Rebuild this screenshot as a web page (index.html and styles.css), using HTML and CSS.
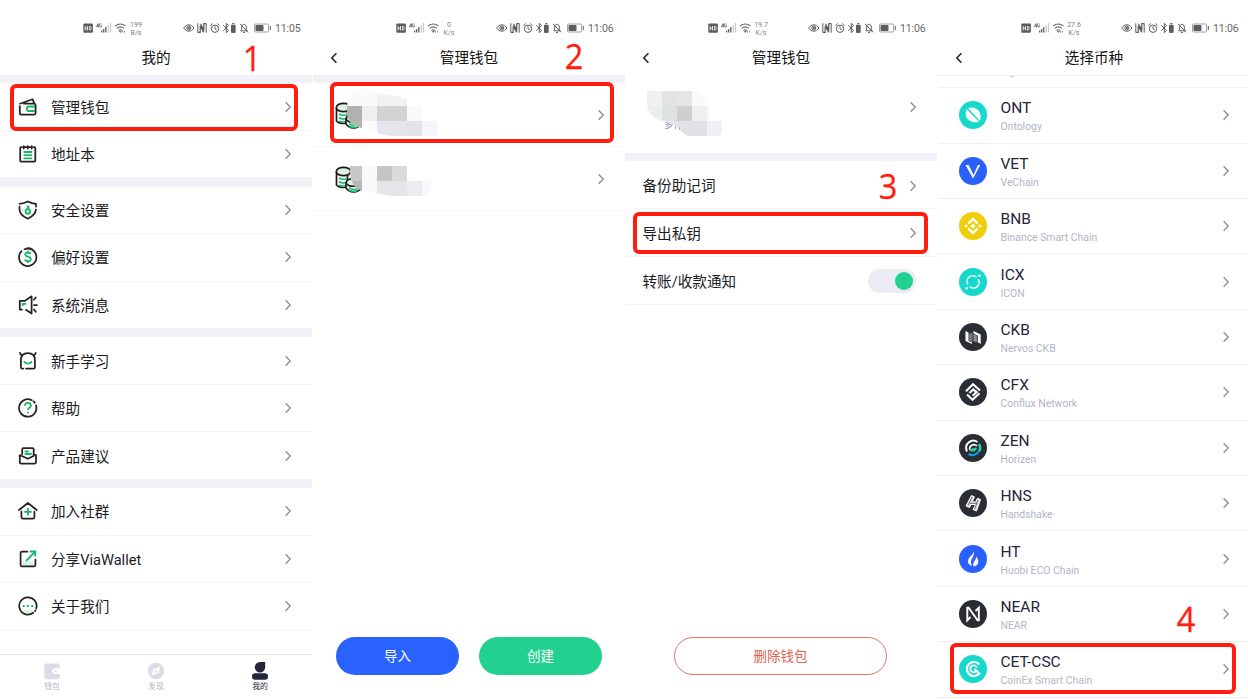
FILE: index.html
```html
<!DOCTYPE html>
<html lang="zh-CN">
<head>
<meta charset="utf-8">
<title>ViaWallet</title>
<link rel="stylesheet" href="styles.css">
</head>
<body>
<svg class="defs" width="0" height="0" aria-hidden="true">
  <symbol id="next" viewBox="0 0 8 12"><path d="M1.600 1.200 6.200 6 1.600 10.800" fill="none" stroke="#8d8da8" stroke-width="1.400"/></symbol>
  <symbol id="back" viewBox="0 0 8 12"><path d="M6.400 1.300 1.800 6 6.400 10.700" fill="none" stroke="#25253c" stroke-width="1.600"/></symbol>
  <symbol id="signals" viewBox="83 21 44 14">
    <rect x="83.300" y="23.500" width="9.600" height="9.300" rx="1" fill="#5c5c5c"/>
    <path d="M85.200 26v4.500M87.500 26v4.500M85.200 28.300h2.300M89.400 26.400v3.700h.6c1.700 0 1.700-3.700 0-3.700z" fill="none" stroke="#fff" stroke-width=".8"/>
    <path d="M98.300 27.500v-4l-2 2.800h2.600M101.500 24.200c-1.600-1-2.200 0-2.200 1.300s1.200 2.200 2.200 1.200v-1h-.9" fill="none" stroke="#555" stroke-width=".8"/>
    <path d="M101.700 32.500v-2M103.700 32.500v-3.500M105.800 32.500v-5.500" stroke="#555" stroke-width="1.200"/>
    <path d="M108.200 32.500v-7.500M110.500 32.500v-9.500" stroke="#c8c8c8" stroke-width="1.200"/>
    <path d="M115 26.200c3.400-2.800 7.300-2.800 10.600 0M116.700 28.400c2.300-1.900 5-1.900 7.200 0M118.500 30.400c1.300-1 2.300-1 3.500 0" fill="none" stroke="#666" stroke-width="1.100"/>
    <path d="M119.300 31.200h2l-1 1.300zM122.600 30.600v2M124.400 30.600v2" fill="#666" stroke="#666" stroke-width=".7"/>
  </symbol>
  <symbol id="indicators" viewBox="183 21 90 14">
    <g fill="none" stroke="#5d5d5d" stroke-width="1">
      <path d="M183.700 28c2.800-4.300 7.400-4.300 10.200 0-2.800 4.300-7.400 4.300-10.200 0z"/>
      <circle cx="188.800" cy="28" r="2"/><circle cx="188.800" cy="28" r=".8" fill="#5d5d5d"/>
      <path d="M197.800 23.300v9.400M206.200 23.300v9.400" stroke-width="1"/>
      <path d="M198 32.400h2.200v-6.500l3.400 6.300v-6.500M206 23.600h-2.200v6.500l-3.400-6.300" stroke-width="1.200"/>
      <circle cx="215" cy="28.700" r="3.700"/><path d="M215 26.300v2.600l1.700 1M210.500 25.500l2.200-2M219.500 25.500l-2.200-2"/>
      <path d="M223.300 25.300l5.300 5.200-2.300 2.200v-9.400l2.300 2.200-5.300 5.200" stroke-width="1"/>
      <path d="M231.500 25.200h3.600v7.200h-3.600z" fill="#5d5d5d"/><path d="M232.200 23.600h2.300"/>
      <path d="M240.800 30.800h6.500l-1-1.500v-2.300c0-3.200-4.200-3.800-4.700-.3v2.600zM243 32.400h2M240 23.800l8 8.500"/>
      <rect x="254.500" y="24" width="14" height="8" rx="1" stroke="#a0a0a0"/>
      <path d="M256 25.500h7v5h-7z" fill="#5d5d5d"/><path d="M270.300 26v4"/>
    </g>
  </symbol>
  <symbol id="coins" viewBox="0 0 28 28">
    <path d="M1.500 5.500v13.500c2.500 3 8 3 11 1.500V5.500" fill="#fff" stroke="#231815" stroke-width="1.700"/>
    <path d="M4 12c2 1.500 5 1.500 8 .7M4 15.500c2 1.500 5 1.500 7 .7M4 19c2 1.200 4 1.200 6 .7" fill="none" stroke="#18ba6e" stroke-width="1.700"/>
    <ellipse cx="8.500" cy="5.500" rx="7.200" ry="4.200" fill="#d9f4e6" stroke="#231815" stroke-width="1.700"/>
    <path d="M11 17v5c3.500 5 11 5 15 1V17z" fill="#fff" stroke="#231815" stroke-width="1.700"/>
    <path d="M14 21.800c3 1.800 7 1.800 9 .8M14 24.300c3 1.300 6 1.300 8 .8" fill="none" stroke="#18ba6e" stroke-width="1.600"/>
    <ellipse cx="18" cy="16.500" rx="6.800" ry="3.800" fill="#d9f4e6" stroke="#231815" stroke-width="1.600"/>
  </symbol>
</svg>

<main class="stage">
  <section class="phone">
    <header class="top">
      <div class="status"><svg class="sig"><use href="#signals"/></svg><span class="speed">199<br>B/s</span><svg class="ind"><use href="#indicators"/></svg><time>11:05</time></div>
      <div class="title">我的</div>
    </header>
    <div class="band"></div>
    <a class="item"><svg class="ico" viewBox="0 0 20 20"><path d="M1.800 9v7.200q0 1.300 1.300 1.300h13q1.500 0 1.500-1.500V8.200q0-1.500-1.500-1.500H6M2 6.700 14.500 2.200l1.800 4.300" class="ink"/><path d="M17 9.500h-6q-2.200 0-2.200 2.300T11 14h6" class="mint heavy"/></svg><span>管理钱包</span><svg class="next"><use href="#next"/></svg></a>
    <a class="item"><svg class="ico" viewBox="0 0 20 20"><path d="M4 3.200H3Q2.200 3.200 2.200 4v12.700q0 .8.800.8h13.500q.8 0 .8-.8V4q0-.8-.8-.8h-1M7.300 3.200h1.500M11 3.200h1.500M5.800 2v2.500M13.700 2v2.500M9.800 2v2.500" class="ink"/><path d="M5.500 8h8.700M5.500 11.200h8.700M5.500 14.400h8.700" class="mint heavy"/></svg><span>地址本</span><svg class="next"><use href="#next"/></svg></a>
    <div class="band"></div>
    <a class="item"><svg class="ico" viewBox="0 0 20 20"><path d="M1.500 6.500v3c0 4.300 4 7.300 8.300 9.200 4.200-1.900 7.700-4.700 8.100-9M18 6.500V3.800c-3.200-.2-5.500-1-8.200-2.300C7.500 2.700 5 3.500 1.600 3.800" class="ink"/><circle cx="9.800" cy="11.500" r="2.300" class="mint heavy wash"/><path d="M9.800 5.500v4M9.800 7.200h1.500" class="mint heavy"/></svg><span>安全设置</span><svg class="next"><use href="#next"/></svg></a>
    <a class="item"><svg class="ico" viewBox="0 0 20 20"><path d="M3.500 4.200a8.700 8.700 0 1 0 3-2M8.800 1.300a8.700 8.700 0 0 1 5.500 1.100" class="ink"/><path d="M12.500 7.200c-.4-2.300-5.300-2.300-5.300 0 0 3.300 5.600 1.600 5.600 5 0 2.800-5.600 2.600-5.700 0M9.900 3.800v2M9.900 13.800v2.300" class="mint heavy"/></svg><span>偏好设置</span><svg class="next"><use href="#next"/></svg></a>
    <a class="item"><svg class="ico" viewBox="0 0 20 20"><path d="M4 14.500H1.800V5.800H7L13.600 1.300v17.200L8 14.800M16 4.800l1.800-2.300M16 10h2.800M16 14.500l1.800 2.300" class="ink"/><path d="M4.700 11V8.800h3.500" class="mint heavy"/></svg><span>系统消息</span><svg class="next"><use href="#next"/></svg></a>
    <div class="band"></div>
    <a class="item"><svg class="ico" viewBox="0 0 20 20"><path d="M2 1.800q.3 1.500 1.700 2.500M17.700 1.800q-.3 1.500-1.700 2.500M8 17.600h7.500q1.400 0 1.400-1.400V9q0-7-7-7Q2.900 2 2.900 9v7.200q0 1.400 1.400 1.400h1" class="ink"/><path d="M5.800 10.300q4.100 4.500 8.200 0" class="mint heavy"/></svg><span>新手学习</span><svg class="next"><use href="#next"/></svg></a>
    <a class="item"><svg class="ico" viewBox="0 0 20 20"><path d="M18 7.300a8.700 8.700 0 1 1-4.200-5M15.700 3.500a9 9 0 0 1 1 1.100" class="ink"/><path d="M6.900 7.800C7 4 12.900 4 12.900 7.500c0 2.200-3 2.200-3 4.500M9.900 13.800v1.700" class="mint heavy"/></svg><span>帮助</span><svg class="next"><use href="#next"/></svg></a>
    <a class="item"><svg class="ico" viewBox="0 0 20 20"><path d="M4.200 8V3.300Q4.200 2 5.500 2h9q1.200 0 1.200 1.300V7.500M15.500 8.500l2.500.7v7q0 1.500-1.500 1.500H3.300q-1.500 0-1.500-1.500V9l8 3.800 5.700-2.800" class="ink"/><path d="M6.700 5.500h4M6.700 8h7" class="mint heavy"/></svg><span>产品建议</span><svg class="next"><use href="#next"/></svg></a>
    <div class="band"></div>
    <a class="item"><svg class="ico" viewBox="0 0 20 20"><path d="M1 9 9.900 2l8.800 7M3.400 10.500v5.700q0 1.500 1.500 1.500h10q1.500 0 1.500-1.500v-5.700" class="ink"/><path d="M9.900 7v7.500M6.200 10.800h7.500" class="mint heavy"/></svg><span>加入社群</span><svg class="next"><use href="#next"/></svg></a>
    <a class="item"><svg class="ico" viewBox="0 0 20 20"><path d="M5 12.500h10V17H5z" fill="#d5f3e4"/><path d="M9.500 2.600H4Q2.600 2.600 2.600 4v12q0 1.400 1.400 1.400h12q1.400 0 1.400-1.400v-5.500" class="ink"/><path d="M8 12 17 2.800M11.800 2.500h5.500v5" class="mint heavy"/></svg><span>分享ViaWallet</span><svg class="next"><use href="#next"/></svg></a>
    <a class="item"><svg class="ico" viewBox="0 0 20 20"><path d="M4 14h12l-3.500 3.500h-5z" fill="#d5f3e4"/><path d="M15.300 16.800a8.700 8.700 0 1 1 3-4.500M17.500 14.300l-.5.800" class="ink"/><path d="M4.600 10h2M8.900 10h2M13.200 10h2" class="mint heavy"/></svg><span>关于我们</span><svg class="next"><use href="#next"/></svg></a>
    <nav class="tabs">
      <div class="tab"><svg viewBox="0 0 18 18"><path d="M3.500 1.500h11q2.200 0 2.200 2V6.300h-4a3.200 3.200 0 0 0 0 5.600h4V15q0 2.200-2.200 2.200h-11q-2.200 0-2.200-2.200V3.700q0-2.200 2.200-2.200z" fill="#dcdce6"/><path d="M12 6.300h5v5.600h-5a2.800 2.800 0 0 1 0-5.600z" fill="#fff"/><circle cx="12.700" cy="9.100" r="1.200" fill="#dcdce6"/></svg><span>钱包</span></div>
      <div class="tab"><svg viewBox="0 0 18 18"><circle cx="9" cy="9" r="8.200" fill="#dcdce6"/><path d="M13.500 4.500 11.500 11l-7 2.500L6.500 7z" fill="#fff"/><path d="M7.500 10.500 10 8" stroke="#dcdce6" stroke-width="1.600"/></svg><span>发现</span></div>
      <div class="tab on"><svg viewBox="0 0 18 18"><path d="M9 0h5.200V5.200A5.200 5.200 0 1 1 9 0z" fill="#25253c"/><rect x="1" y="11.300" width="16" height="6.500" rx="3" fill="#25253c"/></svg><span>我的</span></div>
    </nav>
    <b class="frame f1"></b><b class="num n1">1</b>
  </section>

  <section class="phone second">
    <header class="top">
      <div class="status"><svg class="sig"><use href="#signals"/></svg><span class="speed">0<br>K/s</span><svg class="ind"><use href="#indicators"/></svg><time>11:06</time></div>
      <svg class="back"><use href="#back"/></svg><div class="title">管理钱包</div>
    </header>
    <div class="band"></div>
    <a class="wallet">
      <svg class="blur" viewBox="0 3 104 50">
        <use href="#coins" x="0" y="15" width="28" height="28"/>
        <clipPath id="c1"><path d="M12 20Q13 2 29 2q10 0 15 5 12 0 28 5v7h16v14h14v16H59q-15-1-17-4l-19-5q-12-3-11-20z"/></clipPath>
        <g clip-path="url(#c1)"><path fill="#fafafa" d="M12 0h45v50H12z"/><path fill="#f2f2f2" d="M42 4h30v15H42z"/><path fill="#b3b0b0" d="M12 19h15v15H12z"/><path fill="#a9b8b0" d="M12 34h15v15H12z"/><path fill="#efefef" d="M27 19h15v15H27z"/><path fill="#d3d3d3" d="M42 19h30v15H42z"/><path fill="#fafafa" d="M72 19h15v15H72z"/><path fill="#e5e6eb" d="M42 34h15v15H42z"/><path fill="#e7e7e9" d="M57 34h15v15H57z"/><path fill="#e4e4e7" d="M72 34h15v15H72z"/><path fill="#f5f6fb" d="M87 34h15v15H87z"/></g>
      </svg>
      <svg class="next"><use href="#next"/></svg>
    </a>
    <a class="wallet">
      <svg class="blur" viewBox="0 3 104 50">
        <use href="#coins" x="0" y="15" width="28" height="28"/>
        <clipPath id="c2"><path d="M15 15h57v15h24q1 10-6 15H57L27 40Q16 36 15 23z"/></clipPath>
        <g clip-path="url(#c2)"><path fill="#c9c8c8" d="M12 15h15v15H12z"/><path fill="#b1bbb5" d="M12 30h15v15H12z"/><path fill="#f8f8fa" d="M27 15h15v30H27z"/><path fill="#c5c5c5" d="M42 15h15v15H42z"/><path fill="#dadada" d="M57 15h15v15H57z"/><path fill="#e5e5e9" d="M42 30h30v15H42z"/><path fill="#ececef" d="M72 30h15v15H72z"/><path fill="#f7f8fc" d="M87 30h15v15H87z"/></g>
      </svg>
      <svg class="next"><use href="#next"/></svg>
    </a>
    <div class="actions"><button class="btn blue">导入</button><button class="btn green">创建</button></div>
    <b class="frame f2"></b><b class="num n2">2</b>
  </section>

  <section class="phone">
    <header class="top">
      <div class="status"><svg class="sig"><use href="#signals"/></svg><span class="speed">19.7<br>K/s</span><svg class="ind"><use href="#indicators"/></svg><time>11:06</time></div>
      <svg class="back"><use href="#back"/></svg><div class="title">管理钱包</div>
    </header>
    <a class="profile">
      <span class="hint">多</span>
      <svg class="mask" viewBox="0 0 80 48">
        <clipPath id="c3"><path d="M5 1h50q9 2 13 15v15h15v6q0 8-8 9H46q-6-3-8-7l-8-5-7-3H21Q6 28 5 14z"/></clipPath>
        <g clip-path="url(#c3)"><path fill="#fafafa" d="M0 1h80v15H0z"/><path fill="#f0f0f0" d="M5 1h15v15H5z"/><path fill="#e3e3e6" d="M20 1h15v15H20z"/><path fill="#e5e5e8" d="M35 1h15v15H35z"/><path fill="#eceeec" d="M0 16h20v15H0z"/><path fill="#e0e1e3" d="M20 16h15v15H20z"/><path fill="#cfcfd1" d="M35 16h15v15H35z"/><path fill="#efeff1" d="M50 16h15v15H50z"/><path fill="#fafafa" d="M65 16h15v15H65z"/><path fill="#e6e6ea" d="M20 31h15v15H20z"/><path fill="#e2e2e6" d="M35 31h30v15H35z"/><path fill="#f0f0f3" d="M65 31h15v15H65z"/></g>
        <path d="M33.500 36v3M37.500 37.500v2.500" stroke="#a9a9bd"/>
      </svg>
      <svg class="next"><use href="#next"/></svg>
    </a>
    <div class="band"></div>
    <a class="item plain"><span>备份助记词</span><svg class="next"><use href="#next"/></svg></a>
    <a class="item plain"><span>导出私钥</span><svg class="next"><use href="#next"/></svg></a>
    <a class="item plain"><span>转账/收款通知</span><i class="toggle"></i></a>
    <div class="actions one"><button class="btn red">删除钱包</button></div>
    <b class="frame f3"></b><b class="num n3">3</b>
  </section>

  <section class="phone fourth">
    <header class="top">
      <div class="status"><svg class="sig"><use href="#signals"/></svg><span class="speed">27.6<br>K/s</span><svg class="ind"><use href="#indicators"/></svg><time>11:06</time></div>
      <svg class="back"><use href="#back"/></svg><div class="title">选择币种</div>
    </header>
    <div class="cut"><svg viewBox="0 0 6 3"><path d="M1 0q1.500 2 4 0" fill="none" stroke="#b9b9c9"/></svg></div>
    <a class="coin"><svg class="logo" viewBox="0 0 28 28"><circle cx="14" cy="14" r="14" fill="#17d8cc"/><path d="M7.800 8.200 20 20.700C12 23.500 3.500 16.500 7.800 8.200zM9.200 7.300C15.500 4 24.500 10.500 21 20z" fill="#fff"/></svg><span class="name">ONT<small>Ontology</small></span><svg class="next"><use href="#next"/></svg></a>
    <a class="coin"><svg class="logo" viewBox="0 0 28 28"><circle cx="14" cy="14" r="14" fill="#2a60fb"/><path d="M6.500 8h3.200l4.800 10L18.900 8h2.400L14 21.500z" fill="#fff"/></svg><span class="name">VET<small>VeChain</small></span><svg class="next"><use href="#next"/></svg></a>
    <a class="coin"><svg class="logo" viewBox="0 0 28 28"><circle cx="14" cy="14" r="14" fill="#efcf0b"/><path d="M9.300 11.500 14 6.900l4.700 4.600M9.300 16.500l4.700 4.600 4.700-4.600" fill="none" stroke="#fff" stroke-width="2.400"/><path d="m14 11.500 2.500 2.500-2.500 2.500-2.500-2.500zM7.200 12.200 9 14l-1.800 1.800L5.400 14zM20.800 12.200l1.800 1.800-1.800 1.800L19 14z" fill="#fff"/></svg><span class="name">BNB<small>Binance Smart Chain</small></span><svg class="next"><use href="#next"/></svg></a>
    <a class="coin"><svg class="logo" viewBox="0 0 28 28"><circle cx="14" cy="14" r="14" fill="#17d8cc"/><path d="M17.500 9.300A5.600 5.600 0 0 0 9 16.500M10.700 18.700A5.600 5.600 0 0 0 19 11.300" fill="none" stroke="#fff" stroke-width="1.500"/><circle cx="20.300" cy="7.700" r="1.300" fill="#fff"/><circle cx="7.700" cy="20.300" r="1.300" fill="#fff"/></svg><span class="name">ICX<small>ICON</small></span><svg class="next"><use href="#next"/></svg></a>
    <a class="coin"><svg class="logo" viewBox="0 0 28 28"><circle cx="14" cy="14" r="14" fill="#2a2d33"/><path d="m6.500 8 3 1.500v8.500l3.500 1.500v1.500L6.500 18z" fill="#fff"/><path d="M10 11v7l3.500 1.500V9.500z" fill="#77797e"/><path d="m14.500 8 7.200 3.500v9.500L18.800 19.200V12.500l-4.300-2z" fill="#fff"/><path d="m14.500 11 3.300 1.500v7l-3.300-1.500z" fill="#8f9195"/></svg><span class="name">CKB<small>Nervos CKB</small></span><svg class="next"><use href="#next"/></svg></a>
    <a class="coin"><svg class="logo" viewBox="0 0 28 28"><circle cx="14" cy="14" r="14" fill="#2a2d33"/><path d="m7 13.200 7-7 7 6.300M10.500 15l3.800-3.500 3.300 2.500-4 3.800M8 16.500l5.500 5.200 7-6.500" fill="none" stroke="#fff" stroke-width="2.200"/></svg><span class="name">CFX<small>Conflux Network</small></span><svg class="next"><use href="#next"/></svg></a>
    <a class="coin"><svg class="logo" viewBox="0 0 28 28"><circle cx="14" cy="14" r="14" fill="#2a2d33"/><path d="M8 17.500C4.500 9.500 13 4 18.500 8" fill="none" stroke="#fff" stroke-width="2"/><path d="M11 16c-1.500-4.500 4-7 7-4" fill="none" stroke="#fff" stroke-width="1.700"/><path d="M20 10c3.500 7-4 13.500-10.500 10" fill="none" stroke="#139bea" stroke-width="2.200"/><path d="M20.200 10q2 4 .2 7" fill="none" stroke="#23d6a0" stroke-width="2.200"/><path d="M11 16.500q3-3 6.500-2.500-1 4.500-6.500 2.500z" fill="#23d6a0" stroke="#23d6a0"/></svg><span class="name">ZEN<small>Horizen</small></span><svg class="next"><use href="#next"/></svg></a>
    <a class="coin"><svg class="logo" viewBox="0 0 28 28"><circle cx="14" cy="14" r="14" fill="#2a2d33"/><path d="M12.500 6.500 7 17l3.500 1.500L12.200 15.500h4.300L14 20.500l3.500 1.500L21.500 10.500l-3-1.200L16.500 13h-3.500L15.500 8z" fill="#d9dadb" stroke="#fff" stroke-width="1"/><path d="m13 8-4 8.500M19 11l-3.500 9M11 14.300h7" stroke="#55575c" stroke-width=".8"/></svg><span class="name">HNS<small>Handshake</small></span><svg class="next"><use href="#next"/></svg></a>
    <a class="coin"><svg class="logo" viewBox="0 0 28 28"><circle cx="14" cy="14" r="14" fill="#2a60fb"/><path d="M14.500 6c1.500 5.500-2.300 7-2.500 10.500 0 2 .5 3.500 1 4.500-4.500-1.200-5.200-5.700-2.300-8.700 2-2 3.600-3.500 3.800-6.300zM17.200 11.500c2 2.500 2.600 4.500 1.800 6.800-.7 2-2.200 2.900-4.300 3.200-2-4 2.200-5 2.500-10z" fill="#fff"/></svg><span class="name">HT<small>Huobi ECO Chain</small></span><svg class="next"><use href="#next"/></svg></a>
    <a class="coin"><svg class="logo" viewBox="0 0 28 28"><circle cx="14" cy="14" r="14" fill="#2a2d33"/><path d="m11.500 17-3.200 3.300V7.800h1.300l9 12.500h1.200V7.800L16.500 11" fill="none" stroke="#fff" stroke-width="1.900"/></svg><span class="name">NEAR<small>NEAR</small></span><svg class="next"><use href="#next"/></svg></a>
    <a class="coin"><svg class="logo" viewBox="0 0 28 28"><circle cx="14" cy="14" r="14" fill="#17d8cc"/><path d="M20.300 9.500A7 7 0 1 0 20.300 18.500L15.500 14" fill="none" stroke="#fff" stroke-width="2.200"/><path d="M18 12.500a3.500 3.500 0 1 0-.5 3.500" fill="none" stroke="#fff" stroke-width="1.800"/></svg><span class="name">CET-CSC<small>CoinEx Smart Chain</small></span><svg class="next"><use href="#next"/></svg></a>
    <b class="frame f4"></b><b class="num n4">4</b>
  </section>
</main>
</body>
</html>
```
FILE: styles.css
```css
* { box-sizing: border-box; }
body {
  margin: 0;
  background: #fff;
  color: #1b1b1f;
  font-family: Roboto, "Noto Sans CJK SC", sans-serif;
}
svg { display: block; flex: none; }
.defs { position: absolute; }
.stage { display: flex; width: 1248px; height: 699px; overflow: hidden; }
.phone {
  position: relative;
  flex: none;
  width: 312px;
  height: 699px;
  display: flex;
  flex-direction: column;
}
.second, .fourth { margin-left: 1px; }

/* Header */
.top { position: relative; flex: none; height: 75.3px; padding-top: 18px; }
.status { display: flex; align-items: center; height: 20px; padding-left: 83px; }
.sig { width: 44px; height: 14px; }
.speed { width: 18px; text-align: center; font-size: 7px; line-height: 8px; color: #808080; padding-top: 1px; }
.ind { width: 90px; height: 14px; margin-left: 38px; }
.status time { margin-left: 2px; padding-top: 2px; font-size: 10.5px; letter-spacing: -0.15px; color: #666; line-height: 14px; }
.title { height: 40px; line-height: 40px; text-align: center; font-size: 14.6px; color: #111; }
.back { position: absolute; left: 16.5px; top: 52px; width: 8px; height: 12px; }
.band { flex: none; height: 8.1px; background: #f1f1f7; }

/* Menu rows */
.item {
  flex: none;
  display: flex;
  align-items: center;
  height: 47.55px;
  padding: 0 20px 0 17.5px;
  border-bottom: 1px solid #f6f6f8;
  font-size: 14.6px;
  line-height: 20px;
}
.item .ico { width: 20px; height: 20px; margin-right: 13.5px; }
.item span { flex: 1; padding-top: 2px; }
.ink { fill: none; stroke: #2a2020; stroke-width: 1.75; stroke-linecap: round; stroke-linejoin: round; }
.mint { fill: none; stroke: #16b86b; }
.heavy { stroke-width: 1.8; }
.wash { fill: #d5f3e4; }
.next { width: 8px; height: 12px; }
.plain { height: 47.9px; }
.item.plain span { padding-top: 3px; }
.plain .next { margin-top: 2px; }

.tabs {
  display: flex;
  margin-top: auto;
  height: 45px;
  border-top: 1px solid #e6e6ea;
}
.tab {
  flex: 1;
  display: flex;
  flex-direction: column;
  align-items: center;
  padding-top: 6.5px;
  font-size: 7.8px;
  line-height: 13px;
  color: #b3b3c5;
}
.tab svg { width: 18px; height: 18px; }
.tab.on { color: #25253c; }

/* Wallet list */
.wallet {
  flex: none;
  display: flex;
  align-items: center;
  justify-content: space-between;
  height: 64px;
  padding: 0 20px 0 22px;
  border-bottom: 1px solid #f4f4f6;
}
.blur { width: 104px; height: 50px; }
.actions { display: flex; justify-content: space-between; margin-top: auto; padding: 0 23px 24.5px; }
.one { justify-content: center; }
.btn {
  width: 123px;
  height: 38px;
  padding: 0;
  border: 0;
  border-radius: 19px;
  font: 13.5px/36px Roboto, "Noto Sans CJK SC", sans-serif;
  color: #fff;
}
.blue { background: #2a62ff; }
.green { background: #22d08f; }
.red { width: 213px; margin-right: 1px; background: #fff; border: 1px solid #e27565; color: #e0634f; }

/* Wallet detail */
.profile {
  position: relative;
  flex: none;
  display: flex;
  align-items: flex-start;
  justify-content: space-between;
  height: 77.7px;
  padding: 14.7px 20px 0 17px;
}
.profile .next { margin-top: 11px; }
.hint { position: absolute; left: 39px; top: 43px; font-size: 9px; line-height: 15px; color: #8f8fa8; }
.mask { position: relative; width: 80px; height: 48px; }
.toggle {
  display: flex;
  align-items: center;
  justify-content: flex-end;
  width: 48.5px;
  height: 24px;
  margin: 1px 1px 0 0;
  padding-right: 3px;
  border-radius: 12px;
  background: #ebebf3;
}
.toggle::after { content: ""; width: 18px; height: 18px; border-radius: 9px; background: #22d08f; }

/* Coin list */
.cut { flex: none; height: 13px; padding-left: 71px; border-top: 1px solid #ededf2; border-bottom: 1px solid #ededf2; }
.cut svg { width: 6px; height: 3px; }
.coin {
  flex: none;
  display: flex;
  align-items: center;
  height: 55.4px;
  padding: 0 20px 0 20.5px;
  border-bottom: 1px solid #ededf2;
}
.logo { width: 28px; height: 28px; margin-right: 14px; }
.name { flex: 1; font-size: 15.5px; line-height: 19px; color: #25253c; padding-top: 4px; }
.name small { display: block; font-size: 10.4px; line-height: 17px; color: #b4b4c6; }

/* Step callouts */
.frame { position: absolute; border: 4px solid #ff1d0f; border-radius: 6px; }
.f1 { left: 9.5px; top: 84px; width: 288.5px; height: 47px; }
.f2 { left: 17px; top: 82px; width: 284px; height: 61px; }
.f3 { left: 8px; top: 212px; width: 295px; height: 42px; }
.f4 { left: 12px; top: 643px; width: 286px; height: 51px; }
.num {
  position: absolute;
  font: 400 35px/40px "Open Sans", sans-serif;
  color: #ff1d0f;
  -webkit-text-stroke: 0.3px #ff1d0f;
  transform: scaleX(0.93);
}
.n1 { left: 242px; top: 38px; }
.n2 { left: 251px; top: 36px; }
.n3 { left: 253px; top: 166px; }
.n4 { left: 238px; top: 599px; }
```
